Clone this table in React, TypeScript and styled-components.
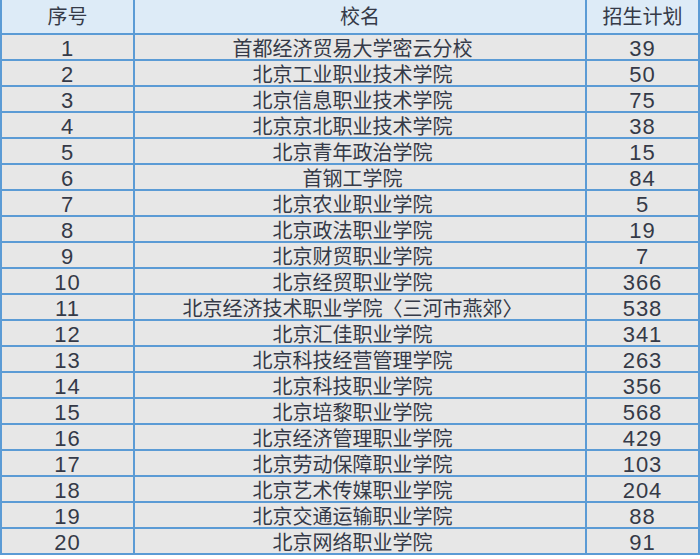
import React from 'react'
import styled, { createGlobalStyle } from 'styled-components';

const GlobalStyle = createGlobalStyle`
  html, body {
    margin: 0;
    padding: 0;
    background: #ffffff;
  }
`;

const schools: [number, string, number][] = [
  [1, '首都经济贸易大学密云分校', 39],
  [2, '北京工业职业技术学院', 50],
  [3, '北京信息职业技术学院', 75],
  [4, '北京京北职业技术学院', 38],
  [5, '北京青年政治学院', 15],
  [6, '首钢工学院', 84],
  [7, '北京农业职业学院', 5],
  [8, '北京政法职业学院', 19],
  [9, '北京财贸职业学院', 7],
  [10, '北京经贸职业学院', 366],
  [11, '北京经济技术职业学院〈三河市燕郊〉', 538],
  [12, '北京汇佳职业学院', 341],
  [13, '北京科技经营管理学院', 263],
  [14, '北京科技职业学院', 356],
  [15, '北京培黎职业学院', 568],
  [16, '北京经济管理职业学院', 429],
  [17, '北京劳动保障职业学院', 103],
  [18, '北京艺术传媒职业学院', 204],
  [19, '北京交通运输职业学院', 88],
  [20, '北京网络职业学院', 91],
];

const Table = styled.div`
  display: grid;
  grid-template-columns: 131px 450px 111px;
  grid-template-rows: 33px repeat(20, 24px);
  gap: 2px;
  width: 700px;
  box-sizing: border-box;
  padding: 0 2px 2px 2px;
  background: #5b9bd5;
  font-family: "Liberation Sans", "Noto Sans CJK SC", sans-serif;
  color: #353a48;
`;

const Cell = styled.div<{ $head?: boolean; $num?: boolean; $shift?: number }>`
  display: flex;
  align-items: center;
  justify-content: center;
  box-sizing: border-box;
  background: ${props => props.$head ? '#ddebf7' : '#e7e7e7'};
  font-size: ${props => props.$num ? '22px' : '20px'};
  letter-spacing: ${props => props.$num ? '1px' : '0'};
  line-height: 1;
  white-space: nowrap;
  overflow: hidden;
  padding-top: ${props => props.$head ? '1px' : '3px'};
  padding-right: ${props => props.$shift ? `${props.$shift}px` : '0'};
`;

const App = () => {
  return (
    <>
      <GlobalStyle />
      <Table>
        <Cell $head>序号</Cell>
        <Cell $head>校名</Cell>
        <Cell $head>招生计划</Cell>
        {schools.map(([no, name, plan]) => (
          <React.Fragment key={no}>
            <Cell $num>{no}</Cell>
            <Cell $shift={15}>{name}</Cell>
            <Cell $num>{plan}</Cell>
          </React.Fragment>
        ))}
      </Table>
    </>
  )
}

export default App;
